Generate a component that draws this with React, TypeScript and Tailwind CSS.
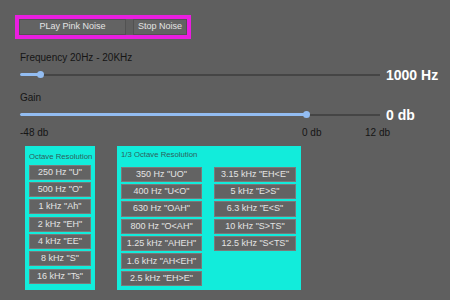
import React from "react";

const font = { fontFamily: '"Liberation Sans", Arial, sans-serif' };

function Btn({ label, w, h, b }: { label: string; w: string; h: string; b: string }) {
  return (
    <div
      className={`${w} ${h} ${b} flex items-center justify-center bg-[#636363] border text-[9px] leading-none text-[#e4e4e4] whitespace-nowrap`}
    >
      {label}
    </div>
  );
}

function Slider({ pct, label }: { pct: number; label: string }) {
  return (
    <div className="flex items-center h-[16px] pl-[20px]">
      <div className="relative w-[360px] h-[16px] flex items-center">
        <div className="absolute left-0 right-0 h-[2px] bg-[#454545]" />
        <div
          className="absolute left-0 h-[3px] bg-[#93bdf2] rounded-full"
          style={{ width: `${pct}px` }}
        />
        <div
          className="absolute w-[7px] h-[7px] rounded-full bg-[#93bdf2]"
          style={{ left: `${pct - 3.5}px` }}
        />
      </div>
      <div className="ml-[6px] text-[14px] leading-[16px] font-bold text-white">{label}</div>
    </div>
  );
}

export default function App() {
  const oct = ['250 Hz "U"', '500 Hz "O"', '1 kHz "Ah"', '2 kHz "EH"', '4 kHz "EE"', '8 kHz "S"', '16 kHz "Ts"'];
  const third1 = ['350 Hz "UO"', '400 Hz "U<O"', '630 Hz "OAH"', '800 Hz "O<AH"', '1.25 kHz "AHEH"', '1.6 kHz "AH<EH"', '2.5 kHz "EH>E"'];
  const third2 = ['3.15 kHz "EH<E"', '5 kHz "E>S"', '6.3 kHz "E<S"', '10 kHz "S>TS"', '12.5 kHz "S<TS"'];
  const pb = "border-[#7a7a7a]";
  return (
    <div className="w-[450px] h-[300px] bg-[#5f5f5f] overflow-hidden" style={font}>
      <div className="pt-[12px] pl-[15px]">
        <div className="inline-flex gap-[7px] border-4 border-[#ea1ee0]">
          <Btn label="PLay Pink Noise" w="w-[107px]" h="h-[16px]" b="border-[#525252]" />
          <Btn label="Stop Noise" w="w-[54px]" h="h-[16px]" b="border-[#525252]" />
        </div>
      </div>
      <div className="mt-[13px] pl-[20px] text-[10px] leading-[12px] text-[#151515]">Frequency 20Hz - 20KHz</div>
      <div className="mt-[3px]">
        <Slider pct={20} label="1000 Hz" />
      </div>
      <div className="mt-[9px] pl-[20px] text-[10px] leading-[12px] text-[#151515]">Gain</div>
      <div className="mt-[3px]">
        <Slider pct={286} label="0 db" />
      </div>
      <div className="mt-[4px] pl-[20px] flex text-[10px] leading-[12px] text-[#151515]">
        <span className="w-[282px]">-48 db</span>
        <span className="w-[63px]">0 db</span>
        <span>12 db</span>
      </div>
      <div className="mt-[7px] pl-[25px] flex gap-[22px]">
        <div className="w-[70px] h-[144px] bg-[#12ecdb] px-[4px] pt-[6px]">
          <div className="text-[7.75px] leading-[9px] text-[#2d5f5b] whitespace-nowrap">Octave Resolution</div>
          <div className="mt-[4px] flex flex-col gap-[2.35px]">
            {oct.map((l) => (
              <Btn key={l} label={l} w="w-[62px]" h="h-[15px]" b={pb} />
            ))}
          </div>
        </div>
        <div className="w-[184px] h-[144px] bg-[#12ecdb] px-[4px] pt-[4.5px]">
          <div className="text-[7.75px] leading-[9px] text-[#2d5f5b] whitespace-nowrap">1/3 Octave Resolution</div>
          <div className="mt-[7.5px] flex gap-[12px]">
            <div className="flex flex-col gap-[2.1px]">
              {third1.map((l) => (
                <Btn key={l} label={l} w="w-[81px]" h="h-[15.3px]" b={pb} />
              ))}
            </div>
            <div className="flex flex-col gap-[2.1px]">
              {third2.map((l) => (
                <Btn key={l} label={l} w="w-[82px]" h="h-[15.3px]" b={pb} />
              ))}
            </div>
          </div>
        </div>
      </div>
    </div>
  );
}
